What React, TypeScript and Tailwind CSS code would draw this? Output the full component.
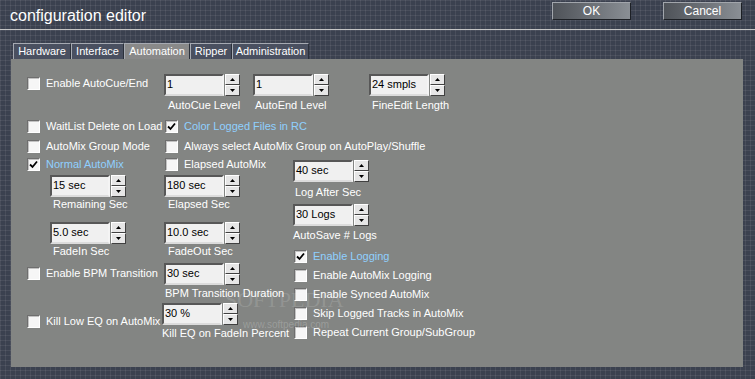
import React from "react";

const Check = ({ label, checked = false, blue = false, w = "" }: { label: string; checked?: boolean; blue?: boolean; w?: string }) => (
  <div className={`flex items-center h-[13px] ${w}`}>
    <span className="w-[13px] h-[13px] shrink-0 bg-[#f6f6f6] border border-t-[#6e6e6e] border-l-[#6e6e6e] border-r-white border-b-white shadow-[inset_1px_1px_0_#c2c2c2] flex items-center justify-center">
      {checked && (
        <svg width="9" height="9" viewBox="0 0 9 9">
          <path d="M1 4.5 L3.5 7 L8 1.5" fill="none" stroke="#000" strokeWidth="1.8" />
        </svg>
      )}
    </span>
    <span className={`ml-[6px] text-[11px] leading-[13px] whitespace-nowrap ${blue ? "text-[#8fd0ff]" : "text-white"}`}>
      {label}
    </span>
  </div>
);

const Arrow = ({ down = false }: { down?: boolean }) => (
  <svg width="5" height="3" viewBox="0 0 5 3">
    <path d={down ? "M0 0 L5 0 L2.5 3 Z" : "M0 3 L5 3 L2.5 0 Z"} fill="#000" />
  </svg>
);

const Spin = ({ value, label, lx = "pl-[3px]", lt = "mt-[3px]" }: { value: string; label: string; lx?: string; lt?: string }) => (
  <div className="flex flex-col w-[76px]">
    <div className="flex h-[22px]">
      <div className="w-[60px] h-[22px] bg-[#f0f0f0] border-2 border-t-[#575757] border-l-[#575757] border-r-[#f4f4f4] border-b-[#dcdcdc] text-[11px] leading-[16px] pl-[1px] text-black whitespace-nowrap">
        {value}
      </div>
      <div className="flex flex-col justify-between w-[15px] ml-[1px]">
        <div className="h-[11px] bg-[#e6e6e6] border border-t-white border-l-white border-r-[#404040] border-b-[#404040] flex items-center justify-center">
          <Arrow />
        </div>
        <div className="h-[11px] bg-[#e6e6e6] border border-t-white border-l-white border-r-[#404040] border-b-[#404040] flex items-center justify-center">
          <Arrow down />
        </div>
      </div>
    </div>
    <div className={`${lt} ${lx} text-[11px] leading-[13px] text-white whitespace-nowrap`}>{label}</div>
  </div>
);

const Btn = ({ children }: { children: React.ReactNode }) => (
  <div className="w-[79px] h-[18px] bg-gradient-to-r from-[#4f5359] to-[#8a8f95] border border-t-[#a2a6ac] border-l-[#a2a6ac] border-r-[#1d2025] border-b-[#1d2025] text-white text-[12px] leading-[16px] text-center">
    {children}
  </div>
);

const tabs = [
  { name: "Hardware", w: "w-[58px]" },
  { name: "Interface", w: "w-[53px]" },
  { name: "Automation", w: "w-[66px]", active: true },
  { name: "Ripper", w: "w-[42px]" },
  { name: "Administration", w: "w-[77px]" },
];

export default function App() {
  return (
    <div className="w-[755px] h-[379px] overflow-hidden bg-[#3b414f] bg-[linear-gradient(rgba(255,255,255,0.07)_1px,transparent_1px),linear-gradient(90deg,rgba(255,255,255,0.07)_1px,transparent_1px)] bg-[length:5px_5px] font-['Liberation_Sans',Arial,sans-serif]">
      {/* Header */}
      <div className="h-[29px] flex items-start">
        <div className="pl-[10px] pt-[6px] text-[16px] leading-[20px] text-white">configuration editor</div>
        <div className="ml-auto mr-[13px] mt-[2px] flex gap-[32px]">
          <Btn>OK</Btn>
          <Btn>Cancel</Btn>
        </div>
      </div>
      <div className="h-px bg-[#c4c4c4]" />

      {/* Tabs */}
      <div className="flex ml-[13px] mt-[13px] h-[16px]">
        {tabs.map((t) => (
          <div
            key={t.name}
            className={`${t.w} h-[16px] border-t border-l border-[#a6aab2] border-r border-r-[#2b303a] text-[11px] leading-[15px] text-white text-center ${
              t.active ? "bg-[#898989]" : "bg-[#4a5060]"
            }`}
          >
            {t.name}
          </div>
        ))}
      </div>

      {/* Panel */}
      <div className="relative ml-[11px] w-[732px] h-[308px] bg-[#838583] pl-[16px] pt-[15px]">
        <div className="flex">
          <div className="w-[137px] mt-[3px]">
            <Check label="Enable AutoCue/End" />
          </div>
          <Spin value="1" label="AutoCue Level" lx="pl-[4px]" />
          <div className="ml-[13px]">
            <Spin value="1" label="AutoEnd Level" lx="pl-[2px]" />
          </div>
          <div className="ml-[40px]">
            <Spin value="24 smpls" label="FineEdit Length" />
          </div>
        </div>

        <div className="flex mt-[8px]">
          <Check w="w-[138px]" label="WaitList Delete on Load" />
          <Check checked blue label="Color Logged Files in RC" />
        </div>
        <div className="flex mt-[7px]">
          <Check w="w-[138px]" label="AutoMix Group Mode" />
          <Check label="Always select AutoMix Group on AutoPlay/Shuffle" />
        </div>

        <div className="flex mt-[5px]">
          <div className="w-[266px] flex flex-col">
            <div className="flex">
              <Check w="w-[138px]" checked blue label="Normal AutoMix" />
              <Check label="Elapsed AutoMix" />
            </div>
            <div className="flex mt-[4px] pl-[23px]">
              <Spin value="15 sec" label="Remaining Sec" lt="mt-[1px]" />
              <div className="ml-[38px]">
                <Spin value="180 sec" label="Elapsed Sec" lx="pl-[4px]" lt="mt-[1px]" />
              </div>
            </div>
            <div className="flex mt-[11px] pl-[23px]">
              <Spin value="5.0 sec" label="FadeIn Sec" lt="mt-[1px]" />
              <div className="ml-[38px]">
                <Spin value="10.0 sec" label="FadeOut Sec" lx="pl-[4px]" lt="mt-[1px]" />
              </div>
            </div>
            <div className="flex mt-[5px]">
              <div className="w-[137px] mt-[4px]">
                <Check label="Enable BPM Transition" />
              </div>
              <Spin value="30 sec" label="BPM Transition Duration" lx="pl-[1px]" lt="mt-[2px]" />
            </div>
            <div className="flex mt-[3px]">
              <div className="w-[135px] mt-[12px]">
                <Check label="Kill Low EQ on AutoMix" />
              </div>
              <Spin value="30 %" label="Kill EQ on FadeIn Percent" lx="pl-0" lt="mt-[2px]" />
            </div>
          </div>

          <div className="flex flex-col pt-[2px]">
            <Spin value="40 sec" label="Log After Sec" lx="pl-[2px]" lt="mt-[4px]" />
            <div className="mt-[5px]">
              <Spin value="30 Logs" label="AutoSave # Logs" lx="pl-0" lt="mt-[3px]" />
            </div>
            <div className="mt-[8px] ml-[1px] flex flex-col gap-[6px]">
              <Check checked blue label="Enable Logging" />
              <Check label="Enable AutoMix Logging" />
              <Check label="Enable Synced AutoMix" />
              <Check label="Skip Logged Tracks in AutoMix" />
              <Check label="Repeat Current Group/SubGroup" />
            </div>
          </div>
        </div>

        {/* watermark */}
        <div className="absolute left-[214px] top-[230px] pointer-events-none text-[22px] leading-none text-white/15 font-['Liberation_Serif',serif]">
          SOFTPEDIA
        </div>
        <div className="absolute left-[232px] top-[261px] pointer-events-none text-[10px] leading-none text-white/20">
          www.softpedia.com
        </div>
      </div>
    </div>
  );
}
